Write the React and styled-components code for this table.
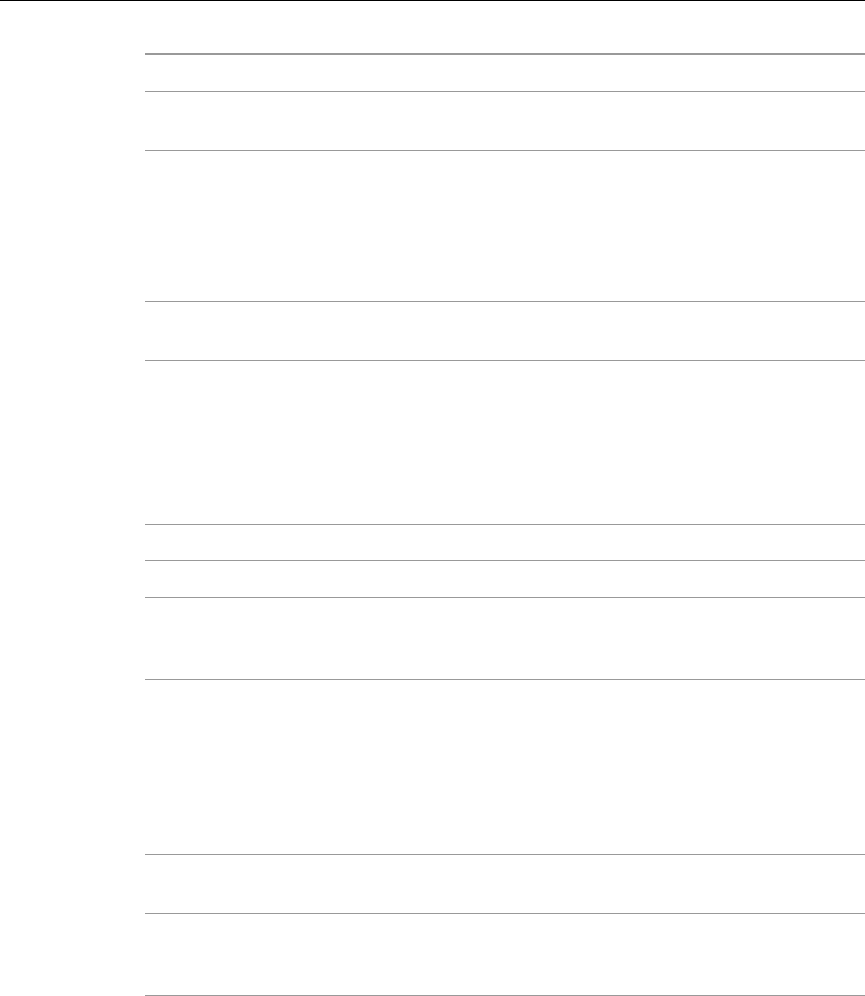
import React from 'react';
import styled, { createGlobalStyle } from 'styled-components';

const GlobalStyle = createGlobalStyle`
    html, body {
        margin: 0;
        padding: 0;
        background: #fff;
        font-family: "Liberation Sans", Arial, sans-serif;
    }
`;

const Page = styled.div`
    border-top: 1px solid #000;
    padding: 52px 0 0 145px;
`;

const Table = styled.div`
    display: flex;
    flex-direction: column;
    border-top: 2px solid #999;
`;

const Row = styled.div`
    box-sizing: border-box;
    height: ${({ h }) => h}px;
    border-bottom: 1px solid #999;
`;

const rowHeights = [37, 59, 151, 59, 164, 36, 37, 82, 175, 59, 82];

const App = () => (
    <>
        <GlobalStyle />
        <Page>
            <Table>
                {rowHeights.map((h, i) => (
                    <Row key={i} h={h} />
                ))}
            </Table>
        </Page>
    </>
);

export default App;
